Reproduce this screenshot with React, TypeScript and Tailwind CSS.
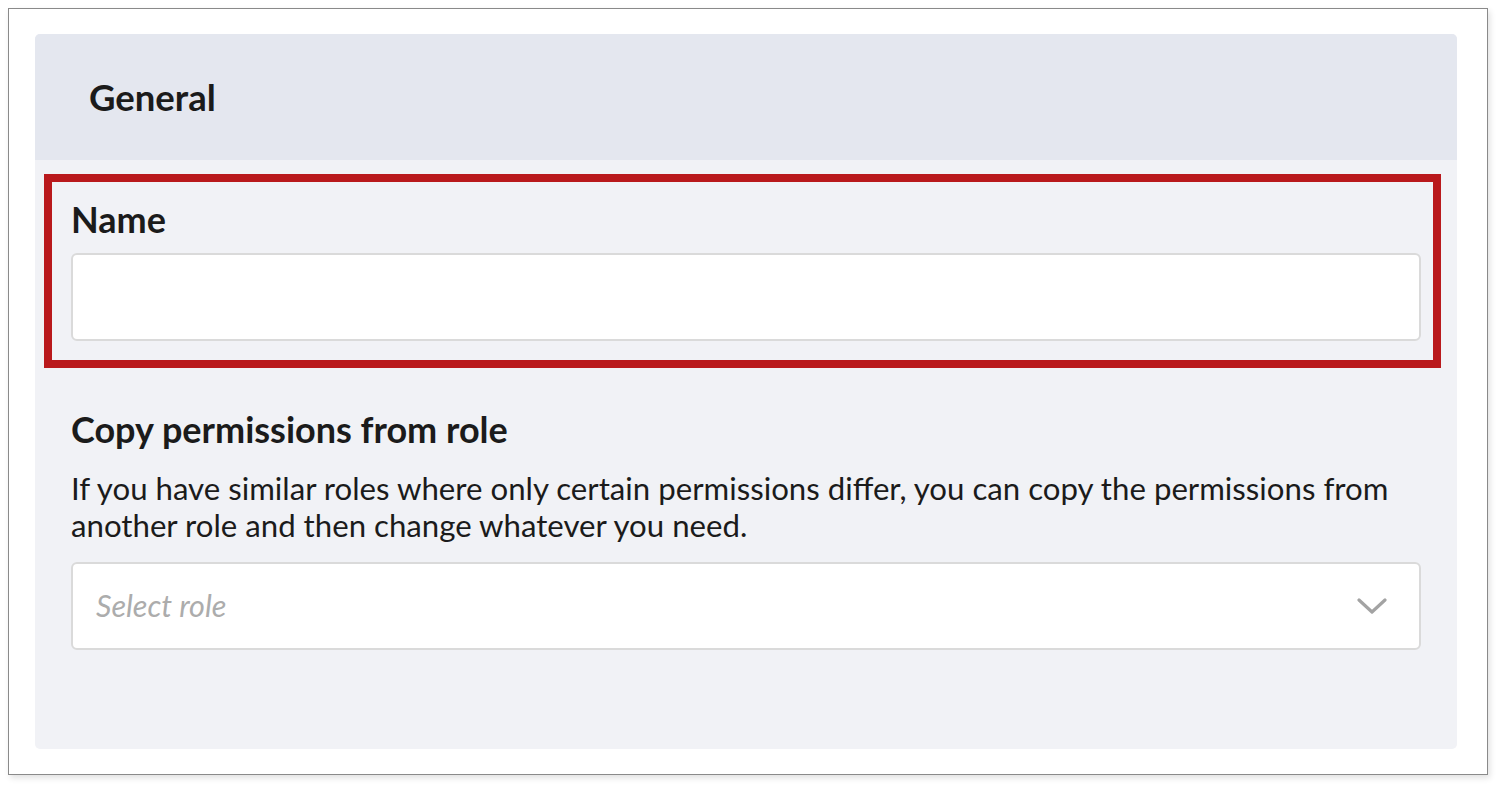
export default function App() {
  return (
    <div className="min-h-screen bg-white p-[8px] font-['Lato','Liberation_Sans',sans-serif] text-[#1b1b1b]">
      <div className="h-[767px] w-[1480px] border border-[#8a8a8a] bg-white pl-[26px] pr-[30px] pt-[25px] shadow-[2px_3px_6px_rgba(0,0,0,0.12)]">
        <div className="flex h-[715px] flex-col overflow-hidden rounded-[5px] bg-[#f1f2f6]">
          <div className="flex h-[126px] items-center bg-[#e4e7ef] pl-[54px]">
            <h2 className="text-[36.5px] font-bold leading-none">General</h2>
          </div>

          <div className="ml-[9px] mr-[16px] mt-[14px] border-8 border-[#b9191c] pb-[19px] pl-[19px] pr-[12px] pt-[14px]">
            <label className="block text-[36px] font-bold leading-[46px]">Name</label>
            <input
              type="text"
              className="mt-[11px] block h-[88px] w-full rounded-[6px] border-2 border-[#dadada] bg-white px-[24px] text-[31px] outline-none"
            />
          </div>

          <div className="px-[36px] pt-[38px]">
            <h3 className="text-[36px] font-bold leading-[46px]">Copy permissions from role</h3>
            <p className="mt-[18px] text-[31.2px] leading-[37px]">
              If you have similar roles where only certain permissions differ, you can copy the permissions from another role and then change whatever you need.
            </p>
            <div className="mt-[18px] flex h-[88px] items-center justify-between rounded-[6px] border-2 border-[#dadada] bg-white pl-[23px] pr-[32px]">
              <span className="text-[30.5px] italic text-[#acacac]">Select role</span>
              <svg width="30" height="18" viewBox="0 0 30 18" fill="none">
                <path d="M2 3l13 12L28 3" stroke="#a3a3a3" strokeWidth="3.2" strokeLinecap="round" strokeLinejoin="round" />
              </svg>
            </div>
          </div>
        </div>
      </div>
    </div>
  );
}
